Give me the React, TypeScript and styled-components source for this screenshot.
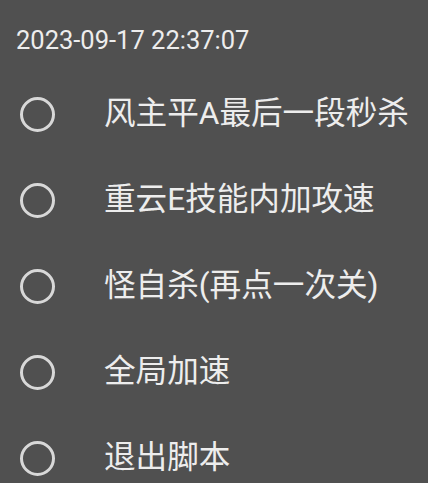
import React from 'react';
import styled, { createGlobalStyle } from 'styled-components';

const GlobalStyle = createGlobalStyle`
  html, body {
    margin: 0;
    padding: 0;
    background: #505050;
  }
  body {
    font-family: Roboto, "Noto Sans CJK SC", sans-serif;
    color: #ececec;
  }
`;

const Panel = styled.div`
  width: 428px;
  height: 483px;
  overflow: hidden;
  background: #505050;
  box-sizing: border-box;
  padding-top: 26px;
`;

const Clock = styled.div`
  padding-left: 16px;
  font-size: 25.5px;
  line-height: 28px;
  height: 28px;
  color: #ededed;
`;

const List = styled.ul`
  list-style: none;
  margin: 17px 0 0;
  padding: 0;
`;

const Row = styled.li`
  display: flex;
  align-items: center;
  height: 86px;
`;

const Radio = styled.span`
  box-sizing: border-box;
  width: 35px;
  height: 35px;
  margin-left: 20px;
  border: 3px solid #d8d8d8;
  border-radius: 50%;
  flex: none;
`;

const Label = styled.span`
  margin-left: 49px;
  font-size: 31.6px;
  line-height: 36px;
  color: #ededed;
  white-space: nowrap;
`;

const items = [
  '风主平A最后一段秒杀',
  '重云E技能内加攻速',
  '怪自杀(再点一次关)',
  '全局加速',
  '退出脚本',
];

const App = () => (
  <>
    <GlobalStyle />
    <Panel>
      <Clock>2023-09-17 22:37:07</Clock>
      <List>
        {items.map(t => (
          <Row key={t}>
            <Radio />
            <Label>{t}</Label>
          </Row>
        ))}
      </List>
    </Panel>
  </>
);

export default App;
